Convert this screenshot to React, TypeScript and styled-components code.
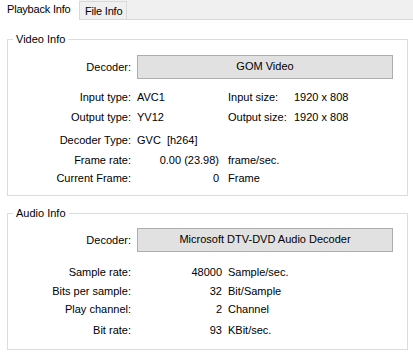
import React from "react";
import styled, { createGlobalStyle } from "styled-components";

const Global = createGlobalStyle`
  html, body { margin: 0; padding: 0; background: #ffffff; }
  body {
    font-family: "Liberation Sans", Arial, sans-serif;
    font-size: 11px;
    line-height: 13px;
    color: #000000;
  }
`;

const Window = styled.div`
  width: 413px;
  height: 357px;
  background: #ffffff;
  display: flex;
  flex-direction: column;
  overflow: hidden;
`;

const TabBar = styled.div`
  height: 19px;
  background: #f0f0f0;
  border-bottom: 1px solid #d9d9d9;
  display: flex;
  align-items: flex-end;
`;

const Tab = styled.div<{ $active?: boolean }>`
  box-sizing: border-box;
  display: flex;
  align-items: center;
  white-space: nowrap;
  flex: none;
  letter-spacing: -0.2px;
  ${(p) =>
    p.$active
      ? `
    height: 20px;
    margin-bottom: -1px;
    padding: 0 0 1px 7px;
    width: 79px;
    background: #ffffff;
  `
      : `
    height: 18px;
    padding: 1px 4px 0 5px;
    background: #f0f0f0;
    border: 1px solid #d9d9d9;
    border-bottom: none;
  `}
`;

const Content = styled.div`
  padding: 0 5px 0 7px;
  display: flex;
  flex-direction: column;
`;

const Group = styled.section<{ $mt: number; $pt: number; $pb: number }>`
  position: relative;
  margin-top: ${(p) => p.$mt}px;
  padding: ${(p) => p.$pt}px 0 ${(p) => p.$pb}px 0;
  border: 1px solid #dcdcdc;
  display: flex;
  flex-direction: column;
`;

const Legend = styled.span`
  position: absolute;
  top: -7px;
  left: 5px;
  padding: 0 3px 0 3px;
  background: #ffffff;
  line-height: 13px;
`;

const Row = styled.div<{ $mt?: number }>`
  display: flex;
  align-items: center;
  height: 13px;
  margin-top: ${(p) => p.$mt ?? 0}px;
  white-space: nowrap;
`;

const ButtonRow = styled.div`
  display: flex;
  align-items: center;
  height: 24px;
`;

const Label = styled.span`
  width: 123px;
  text-align: right;
  margin-right: 6px;
  flex: none;
`;

const Value = styled.span<{ $w: number; $right?: boolean }>`
  width: ${(p) => p.$w}px;
  text-align: ${(p) => (p.$right ? "right" : "left")};
  flex: none;
`;

const Unit = styled.span<{ $ml: number }>`
  margin-left: ${(p) => p.$ml}px;
`;

const DecoderBox = styled.div`
  box-sizing: border-box;
  width: 256px;
  height: 24px;
  background: #e1e1e1;
  border: 1px solid #adadad;
  display: flex;
  align-items: center;
  justify-content: center;
  padding-bottom: 1px;
  white-space: nowrap;
`;

export default function App() {
  return (
    <>
      <Global />
      <Window>
        <TabBar>
          <Tab $active>Playback Info</Tab>
          <Tab>File Info</Tab>
        </TabBar>
        <Content>
          <Group $mt={19} $pt={15} $pb={10}>
            <Legend>Video Info</Legend>
            <ButtonRow>
              <Label>Decoder:</Label>
              <DecoderBox>GOM Video</DecoderBox>
            </ButtonRow>
            <Row $mt={12}>
              <Label>Input type:</Label>
              <Value $w={91}>AVC1</Value>
              <Value $w={66}>Input size:</Value>
              <span>1920 x 808</span>
            </Row>
            <Row $mt={7}>
              <Label>Output type:</Label>
              <Value $w={91}>YV12</Value>
              <Value $w={66}>Output size:</Value>
              <span>1920 x 808</span>
            </Row>
            <Row $mt={10}>
              <Label>Decoder Type:</Label>
              <span>GVC&nbsp;&nbsp;[h264]</span>
            </Row>
            <Row $mt={7}>
              <Label>Frame rate:</Label>
              <Value $w={82} $right>0.00 (23.98)</Value>
              <Unit $ml={9}>frame/sec.</Unit>
            </Row>
            <Row $mt={5}>
              <Label>Current Frame:</Label>
              <Value $w={82} $right>0</Value>
              <Unit $ml={9}>Frame</Unit>
            </Row>
          </Group>
          <Group $mt={17} $pt={14} $pb={12}>
            <Legend>Audio Info</Legend>
            <ButtonRow>
              <Label>Decoder:</Label>
              <DecoderBox>Microsoft DTV-DVD Audio Decoder</DecoderBox>
            </ButtonRow>
            <Row $mt={14}>
              <Label>Sample rate:</Label>
              <Value $w={85} $right>48000</Value>
              <Unit $ml={6}>Sample/sec.</Unit>
            </Row>
            <Row $mt={6}>
              <Label>Bits per sample:</Label>
              <Value $w={85} $right>32</Value>
              <Unit $ml={6}>Bit/Sample</Unit>
            </Row>
            <Row $mt={5}>
              <Label>Play channel:</Label>
              <Value $w={85} $right>2</Value>
              <Unit $ml={6}>Channel</Unit>
            </Row>
            <Row $mt={8}>
              <Label>Bit rate:</Label>
              <Value $w={85} $right>93</Value>
              <Unit $ml={6}>KBit/sec.</Unit>
            </Row>
          </Group>
        </Content>
      </Window>
    </>
  );
}
